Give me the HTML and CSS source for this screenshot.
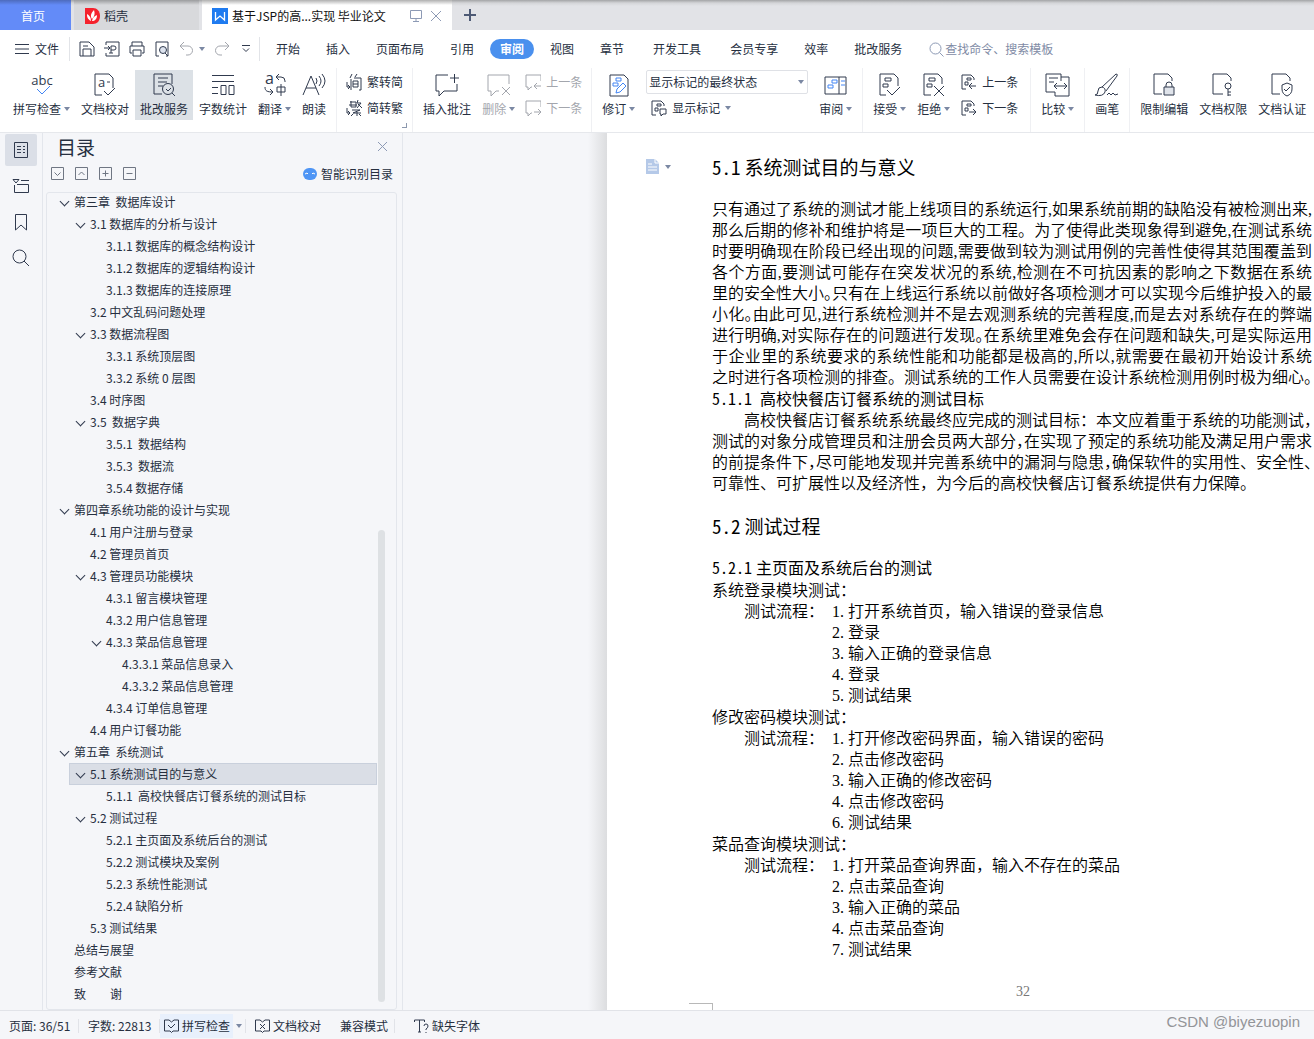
FILE: index.html
```html
<!DOCTYPE html>
<html lang="zh-CN">
<head>
<meta charset="utf-8">
<title>基于JSP的高…实现 毕业论文</title>
<link rel="stylesheet" href="styles.css">
</head>
<body>
<svg class="defs" aria-hidden="true">
  <symbol id="caret" viewBox="0 0 6 4"><path d="M0 0h6L3 4z" fill="#7b88a3" stroke="none"/></symbol>
  <symbol id="bubble" viewBox="0 0 16 16"><path d="M16 7V1H1v12h2v3l3-3h1"/></symbol>
  <symbol id="marks" viewBox="0 0 16 16"><path d="M5 15H1V1h9l3 3v2M4 8h3v3H4zM6 4h4v2H6z"/></symbol>
</svg>

<header class="tabbar">
  <a class="tab tab-home" href="#">首页</a>
  <a class="tab tab-shell" href="#">
    <svg class="logo" width="15" height="16" viewBox="0 0 15 16"><path d="M0 0h8c4 0 7 3 7 8s-3 8-7 8H0z" fill="#f5222d"/><path d="M6 13C2 11 2 8 2 6c2 1 4 3 4 7zM7 11C5 8 6 5 9 2c1 3 1 6-2 9zM7 13c1-4 3-5 5-6 0 4-2 6-5 6z" fill="#fff"/></svg>
    稻壳</a>
  <a class="tab tab-doc" href="#">
    <svg class="logo" width="16" height="16" viewBox="0 0 16 16"><path d="M0 0h16v16H0z" fill="#1f7bf0"/><path d="M3.500 4v8L8 8l4.500 4V4" fill="none" stroke="#fff" stroke-width="1.300"/></svg>
    <span class="tab-title">基于JSP的高...实现 毕业论文</span>
    <svg class="faint" width="12" height="12" viewBox="0 0 12 12"><path d="M.5.5h11v8H.5zM6 8.500v3M3 11.500h6"/></svg>
    <svg class="faint" width="12" height="12" viewBox="0 0 12 12"><path d="m1 1 10 10M11 1 1 11"/></svg>
  </a>
  <button class="tab-new" aria-label="新建"><svg width="12" height="12" viewBox="0 0 12 12"><path d="M6 0v12M0 6h12" stroke="#4d5a75" stroke-width="2"/></svg></button>
</header>

<nav class="menubar">
  <button class="file"><svg width="14" height="10" viewBox="0 0 14 10"><path d="M0 .5h14M0 5h14M0 9.500h14"/></svg>文件</button>
  <div class="quick">
    <button aria-label="保存"><svg width="16" height="16" viewBox="0 0 16 16"><path d="M1 15V1h9l5 5v9zM4 15V8h8v7M4 5h5"/></svg></button>
    <button aria-label="输出为PDF"><svg width="16" height="16" viewBox="0 0 16 16"><path d="M2 4V1h13v14H2v-3M0 7h6M4 5l2 2-2 2M7 12V5h3a2 2 0 0 1 0 4H7M5 12h4"/></svg></button>
    <button aria-label="打印"><svg width="16" height="16" viewBox="0 0 16 16"><path d="M3 5V1h10v4M3 12H1V5h14v7h-2M4 9h8v6H4z"/></svg></button>
    <button aria-label="打印预览"><svg width="16" height="16" viewBox="0 0 16 16"><path d="M5 15H2V1h12v14h-2"/><circle cx="9" cy="9" r="3.500" fill="#dde3ee"/><path d="m11 12 3 3"/></svg></button>
    <button aria-label="撤销" class="dim undo"><svg width="16" height="16" viewBox="0 0 16 16"><path d="M5 1 1 5l4 4M1 5h8a4.500 4.500 0 0 1 0 9H7"/></svg><svg class="caret"><use href="#caret"/></svg></button>
    <button aria-label="恢复" class="dim"><svg width="16" height="16" viewBox="0 0 16 16"><path d="m11 1 4 4-4 4M15 5H6a4.500 4.500 0 0 0 0 9h2"/></svg></button>
    <button aria-label="更多"><svg width="8" height="8" viewBox="0 0 8 8"><path d="M0 .5h8M1 3.500l3 3 3-3"/></svg></button>
  </div>
  <a href="#">开始</a><a href="#">插入</a><a href="#">页面布局</a><a href="#">引用</a><a href="#" class="active">审阅</a><a href="#">视图</a><a href="#">章节</a><a href="#" class="spaced">开发工具</a><a href="#" class="spaced">会员专享</a><a href="#">效率</a><a href="#">批改服务</a>
  <label class="search"><svg width="15" height="15" viewBox="0 0 15 15"><circle cx="6.500" cy="6.500" r="5.500"/><path d="m10.500 10.500 4 4"/></svg><input type="text" placeholder="查找命令、搜索模板" aria-label="查找命令"></label>
</nav>

<section class="ribbon">
  <div class="group first">
    <button class="big"><svg width="26" height="24" viewBox="0 0 26 24"><text x="13" y="12" text-anchor="middle" class="glyph">abc</text><path class="blue" d="m8 16 5 5 8-8"/></svg><span>拼写检查<svg class="caret"><use href="#caret"/></svg></span></button>
    <button class="big"><svg width="24" height="24" viewBox="0 0 24 24"><path d="M9 22H2V1h14l4 4v10M17 9h-3M11 18l4 4 7-7"/><text x="5" y="14" class="glyph">a</text></svg><span>文档校对</span></button>
    <button class="big on"><svg width="24" height="24" viewBox="0 0 24 24"><path d="M10 21H2V1h18v10M6 5h10M6 9h9M6 13h5"/><circle cx="16" cy="16" r="5.500"/><path d="m14 16 2 2 3-3M20 20l3 3"/></svg><span>批改服务</span></button>
    <button class="big"><svg width="24" height="24" viewBox="0 0 24 24"><path d="M1 2.500h22M1 8.500h22M1 14.500h6M1 20.500h6M10 12.500h5v9h-5zM18 12.500h5v9h-5z"/></svg><span>字数统计</span></button>
    <button class="big"><svg width="24" height="24" viewBox="0 0 24 24"><text x="2" y="11" class="glyph big-a">a</text><path d="M16 1l-3 3 3 3M13 4h5a4 4 0 0 1 4 4v1M2 14c0 4 2 5 8 5M7 16l3 3-3 3M14 14h8v5h-8zM18 11v12"/></svg><span>翻译<svg class="caret"><use href="#caret"/></svg></span></button>
    <button class="big"><svg width="24" height="24" viewBox="0 0 24 24"><path d="m1 22 8-19 8 19M4 15h10M14 5q2 3 0 6M17 3q4 5 0 10M20 1q6 7 0 14"/></svg><span>朗读</span></button>
  </div>
  <div class="group launcher">
    <div class="stack">
      <button><svg width="16" height="16" viewBox="0 0 16 16"><path d="M5 5v11M8 4h7v12h-2M7 7h5v6H7zM7 10h5M6 0 4 4M11 0 9 3M1 8v5h2M2 11l2 2-2 2"/></svg>繁转简</button>
      <button><svg width="16" height="16" viewBox="0 0 16 16"><path d="M4 2h6M3 5h8M5 1v6h5V2M12 0l-1 3h4l-4 5M12 4l4 4M6 10h8l-7 3h8M11 12v4M7 14l-2 2M13 14l2 2M1 8v5h2M2 11l2 2-2 2"/></svg>简转繁</button>
    </div>
  </div>
  <div class="group">
    <button class="big"><svg width="24" height="24" viewBox="0 0 24 24"><path d="M13 2H1v16h3v5l5-5h13v-7M15 5h9M19.500 1v9"/></svg><span>插入批注</span></button>
    <button class="big dim"><svg width="24" height="24" viewBox="0 0 24 24"><path d="M22 11V2H1v16h3v5l5-5h3M15 14l8 8M23 14l-8 8"/></svg><span>删除<svg class="caret"><use href="#caret"/></svg></span></button>
    <div class="stack">
      <button class="dim"><svg width="16" height="16" viewBox="0 0 16 16"><use href="#bubble"/><path d="M16 12H9M12 9l-3 3 3 3"/></svg>上一条</button>
      <button class="dim"><svg width="16" height="16" viewBox="0 0 16 16"><use href="#bubble"/><path d="M9 12h7M13 9l3 3-3 3"/></svg>下一条</button>
    </div>
  </div>
  <div class="group">
    <button class="big"><svg width="24" height="24" viewBox="0 0 24 24"><path d="M3 2h14l4 4v17H3z"/><path class="blue" d="M9 5h5v3H9zM6 10h5v3H6zM9 20l1-4 6-6 3 3-6 6z"/></svg><span>修订<svg class="caret"><use href="#caret"/></svg></span></button>
    <div class="stack wide">
      <div class="picker"><select aria-label="显示状态"><option>显示标记的最终状态</option></select><svg class="caret"><use href="#caret"/></svg></div>
      <button class="show"><svg width="16" height="16" viewBox="0 0 16 16"><use href="#marks"/><path d="M9 9h6v5h-3l-2 2v-2H9z"/></svg>显示标记<svg class="caret"><use href="#caret"/></svg></button>
    </div>
    <button class="big"><svg width="24" height="24" viewBox="0 0 24 24"><path d="M1 4h21v17H1zM15 4v17"/><path class="blue" d="M8 7h5v3H8zM4 12h5v3H4zM17 8h4M17 12h4"/></svg><span>审阅<svg class="caret"><use href="#caret"/></svg></span></button>
  </div>
  <div class="group">
    <button class="big"><svg width="24" height="24" viewBox="0 0 24 24"><path d="M8 22H2V1h14l4 4v8M7 5h6v3H7zM5 11h5v3H5zM9 17l5 5 8-8"/></svg><span>接受<svg class="caret"><use href="#caret"/></svg></span></button>
    <button class="big"><svg width="24" height="24" viewBox="0 0 24 24"><path d="M9 22H2V1h14l4 4v6M7 5h6v3H7zM5 11h5v3H5zM12 13l10 10M22 13 12 23"/></svg><span>拒绝<svg class="caret"><use href="#caret"/></svg></span></button>
    <div class="stack roomy">
      <button><svg width="16" height="16" viewBox="0 0 16 16"><use href="#marks"/><path d="M15 12H8M11 9l-3 3 3 3"/></svg>上一条</button>
      <button><svg width="16" height="16" viewBox="0 0 16 16"><use href="#marks"/><path d="M8 12h7M12 9l3 3-3 3"/></svg>下一条</button>
    </div>
  </div>
  <div class="group">
    <button class="big"><svg width="24" height="24" viewBox="0 0 24 24"><path d="M15 8V1H0v18h9M9 19v4h14V4h-8M3 5h9M3 9h5M8 13h13M11 10l-3 3 3 3M18 10l3 3-3 3"/></svg><span>比较<svg class="caret"><use href="#caret"/></svg></span></button>
  </div>
  <div class="group">
    <button class="big"><svg width="24" height="24" viewBox="0 0 24 24"><path d="M7 14 21 1q2 0 1 2L11 18M7 14q-4 0-4 4t-3 4q8 2 10-3 1-4-3-5zM12 22l2-2 2 2 2-2 2 2 3-1"/></svg><span>画笔</span></button>
  </div>
  <div class="group">
    <button class="big"><svg width="24" height="24" viewBox="0 0 24 24"><path d="M10 21H2V1h14l4 4v3M14 14v-2a3 3 0 0 1 6 0v2"/><path d="M12 14h10v8H12z" fill="#dfe3ea"/></svg><span>限制编辑</span></button>
    <button class="big"><svg width="24" height="24" viewBox="0 0 24 24"><path d="M12 21H2V1h14l4 4v3M17 16v7M17 19h3M17 22h3"/><circle cx="17" cy="13" r="3"/></svg><span>文档权限</span></button>
    <button class="big"><svg width="24" height="24" viewBox="0 0 24 24"><path d="M10 21H2V1h14l4 4v3M17 10l5 2v4q0 5-5 7-5-2-5-7v-4zM14 16l2 2 4-4"/></svg><span>文档认证</span></button>
  </div>
</section>

<main class="workspace">
  <aside class="rail">
    <button class="on" aria-label="目录"><svg width="16" height="18" viewBox="0 0 16 18"><path d="M1.500 1.500h13v15h-13zM4 5.500h4M10 5.500h2M4 8.500h4M10 8.500h2M4 11.500h4M10 11.500h2"/></svg></button>
    <button aria-label="章节"><svg width="16" height="16" viewBox="0 0 16 16"><path d="M0 1.500h6L3 5zM8 2.500h8M1.500 7v7.500h14v-8H4"/></svg></button>
    <button aria-label="书签"><svg width="16" height="18" viewBox="0 0 16 18"><path d="M2.500 1.500h11V17L8 12l-5.500 5z"/></svg></button>
    <button aria-label="查找"><svg width="18" height="18" viewBox="0 0 18 18"><circle cx="7.500" cy="7.500" r="6.500"/><path d="m12 12 5 5"/></svg></button>
  </aside>

  <section class="outline">
    <div class="outline-head"><h1>目录</h1><button aria-label="关闭"><svg class="faint" width="11" height="11" viewBox="0 0 11 11"><path d="m1 1 9 9M10 1 1 10"/></svg></button></div>
    <div class="outline-tools">
      <button aria-label="展开"><svg width="13" height="13" viewBox="0 0 13 13"><path d="M.5.5h12v12H.5zM3.500 5.500l3 3 3-3"/></svg></button>
      <button aria-label="收起"><svg width="13" height="13" viewBox="0 0 13 13"><path d="M.5.5h12v12H.5zM3.500 8l3-3 3 3"/></svg></button>
      <button aria-label="增加级别"><svg width="13" height="13" viewBox="0 0 13 13"><path d="M.5.5h12v12H.5zM3.500 6.500h6M6.500 3.500v6"/></svg></button>
      <button aria-label="降低级别"><svg width="13" height="13" viewBox="0 0 13 13"><path d="M.5.5h12v12H.5zM3.500 6.500h6"/></svg></button>
      <a href="#" class="smart"><svg width="14" height="12" viewBox="0 0 14 12"><rect width="14" height="12" rx="6" fill="#4e95f5" stroke="none"/><path d="M2 6l2-1M4 5l1 1M9 6l1-1M10 5l2 1" stroke="#fff"/></svg>智能识别目录</a>
    </div>
    <div class="tree">
      <ul>
        <li class="l0 open">第三章&nbsp; 数据库设计</li>
        <li class="l1 open">3.1 数据库的分析与设计</li>
        <li class="l2">3.1.1 数据库的概念结构设计</li>
        <li class="l2">3.1.2 数据库的逻辑结构设计</li>
        <li class="l2">3.1.3 数据库的连接原理</li>
        <li class="l1">3.2 中文乱码问题处理</li>
        <li class="l1 open">3.3 数据流程图</li>
        <li class="l2">3.3.1 系统顶层图</li>
        <li class="l2">3.3.2 系统 0 层图</li>
        <li class="l1">3.4 时序图</li>
        <li class="l1 open">3.5&nbsp; 数据字典</li>
        <li class="l2">3.5.1&nbsp; 数据结构</li>
        <li class="l2">3.5.3&nbsp; 数据流</li>
        <li class="l2">3.5.4 数据存储</li>
        <li class="l0 open">第四章系统功能的设计与实现</li>
        <li class="l1">4.1 用户注册与登录</li>
        <li class="l1">4.2 管理员首页</li>
        <li class="l1 open">4.3 管理员功能模块</li>
        <li class="l2">4.3.1 留言模块管理</li>
        <li class="l2">4.3.2 用户信息管理</li>
        <li class="l2 open">4.3.3 菜品信息管理</li>
        <li class="l3">4.3.3.1 菜品信息录入</li>
        <li class="l3">4.3.3.2 菜品信息管理</li>
        <li class="l2">4.3.4 订单信息管理</li>
        <li class="l1">4.4 用户订餐功能</li>
        <li class="l0 open">第五章&nbsp; 系统测试</li>
        <li class="l1 open current">5.1 系统测试目的与意义</li>
        <li class="l2">5.1.1&nbsp; 高校快餐店订餐系统的测试目标</li>
        <li class="l1 open">5.2 测试过程</li>
        <li class="l2">5.2.1 主页面及系统后台的测试</li>
        <li class="l2">5.2.2 测试模块及案例</li>
        <li class="l2">5.2.3 系统性能测试</li>
        <li class="l2">5.2.4 缺陷分析</li>
        <li class="l1">5.3 测试结果</li>
        <li class="l0">总结与展望</li>
        <li class="l0">参考文献</li>
        <li class="l0">致　　谢</li>
      </ul>
      <div class="scrollbar"></div>
    </div>
  </section>

  <div class="canvas">
    <article class="page">
      <div class="page-tag"><svg width="13" height="15" viewBox="0 0 13 15"><path d="M0 0h9l4 4v11H0z" fill="#b5c9e8" stroke="none"/><path d="M9 0v4h4M2 5h4M2 8h9M2 11h9" stroke="#fff"/></svg><svg class="caret"><use href="#caret"/></svg></div>
      <h2><span>5.1</span>系统测试目的与意义</h2>
      <p>
        <span class="line">只有通过了系统的测试才能上线项目的系统运行,如果系统前期的缺陷没有被检测出来,</span>
        <span class="line">那么后期的修补和维护将是一项巨大的工程。为了使得此类现象得到避免,在测试系统</span>
        <span class="line">时要明确现在阶段已经出现的问题,需要做到较为测试用例的完善性使得其范围覆盖到</span>
        <span class="line">各个方面,要测试可能存在突发状况的系统,检测在不可抗因素的影响之下数据在系统</span>
        <span class="line">里的安全性大小<i>。</i>只有在上线运行系统以前做好各项检测才可以实现今后维护投入的最</span>
        <span class="line">小化<i>。</i>由此可见,进行系统检测并不是去观测系统的完善程度,而是去对系统存在的弊端</span>
        <span class="line">进行明确,对实际存在的问题进行发现<i>。</i>在系统里难免会存在问题和缺失,可是实际运用</span>
        <span class="line">于企业里的系统要求的系统性能和功能都是极高的,所以,就需要在最初开始设计系统</span>
        <span class="line">之时进行各项检测的排查。测试系统的工作人员需要在设计系统检测用例时极为细心<i>。</i></span>
      </p>
      <h3>5.1.1 高校快餐店订餐系统的测试目标</h3>
      <p>
        <span class="line indent">高校快餐店订餐系统系统最终应完成的测试目标：本文应着重于系统的功能测试<i>，</i></span>
        <span class="line">测试的对象分成管理员和注册会员两大部分<i>，</i>在实现了预定的系统功能及满足用户需求</span>
        <span class="line">的前提条件下<i>，</i>尽可能地发现并完善系统中的漏洞与隐患<i>，</i>确保软件的实用性、安全性<i>、</i></span>
        <span class="line last">可靠性、可扩展性以及经济性，为今后的高校快餐店订餐系统提供有力保障。</span>
      </p>
      <h2 class="second"><span>5.2</span>测试过程</h2>
      <h3 class="second"><span>5.2.1</span>主页面及系统后台的测试</h3>
      <div class="case"><p>系统登录模块测试：</p><div class="flow"><span>测试流程：</span>
        <ul><li><b>1.</b>打开系统首页，输入错误的登录信息</li><li><b>2.</b>登录</li><li><b>3.</b>输入正确的登录信息</li><li><b>4.</b>登录</li><li><b>5.</b>测试结果</li></ul></div></div>
      <div class="case"><p>修改密码模块测试：</p><div class="flow"><span>测试流程：</span>
        <ul><li><b>1.</b>打开修改密码界面，输入错误的密码</li><li><b>2.</b>点击修改密码</li><li><b>3.</b>输入正确的修改密码</li><li><b>4.</b>点击修改密码</li><li><b>6.</b>测试结果</li></ul></div></div>
      <div class="case"><p>菜品查询模块测试：</p><div class="flow"><span>测试流程：</span>
        <ul><li><b>1.</b>打开菜品查询界面，输入不存在的菜品</li><li><b>2.</b>点击菜品查询</li><li><b>3.</b>输入正确的菜品</li><li><b>4.</b>点击菜品查询</li><li><b>7.</b>测试结果</li></ul></div></div>
      <footer class="folio">32</footer>
      <div class="crop"></div>
    </article>
  </div>
</main>

<footer class="status">
  <span class="cell pages">页面: 36/51</span>
  <span class="cell words">字数: 22813</span>
  <button class="spell"><svg width="15" height="14" viewBox="0 0 15 14"><path d="M5 1H.5v11H6l1.500 1.500L9 12h5.500V1H10L7.500 3 5 1M4 6l3 3 4-4"/></svg>拼写检查</button>
  <button class="drop" aria-label="拼写选项"><svg class="caret"><use href="#caret"/></svg></button>
  <button class="proof"><svg width="15" height="14" viewBox="0 0 15 14"><path d="M5 1H.5v11H6l1.500 1.500L9 12h5.500V1H10L7.500 3 5 1M5 5l5 5M10 5l-5 5"/></svg>文档校对</button>
  <span class="cell compat">兼容模式</span>
  <button class="fonts"><svg width="15" height="14" viewBox="0 0 15 14"><path d="M.5 3V1h10v2M5.500 1v12M4 13h3M10 7q0-2 2-2t2 2-2 3v1M12 13v1"/></svg>缺失字体</button>
  <span class="credit">CSDN @biyezuopin</span>
</footer>
</body>
</html>
```
FILE: styles.css
```css
* { box-sizing: border-box; }

body {
  margin: 0;
  height: 100vh;
  display: flex;
  flex-direction: column;
  overflow: hidden;
  background: #f5f6f9;
  color: #262f3f;
  font: 12px/18px "Noto Sans CJK SC", sans-serif;
}

a { color: inherit; text-decoration: none; }
button { font: inherit; color: inherit; background: none; border: 0; padding: 0; white-space: nowrap; }
ul { list-style: none; margin: 0; padding: 0; }
h1, h2, h3, p { margin: 0; font-weight: inherit; }
svg { fill: none; stroke: #303a4e; flex: none; overflow: visible; }
.logo { stroke: none; }
.defs { position: absolute; width: 0; height: 0; }
.caret { width: 6px; height: 4px; }
.faint { stroke: #8d9ab5; }
.blue { stroke: #4285f4; }
.dim { color: #a3a6ad; }
.dim svg { stroke: #a3a6ad; }
.glyph { font: 13px "Open Sans", sans-serif; fill: #303a4e; stroke: none; }
.big-a { font-size: 16px; }

/* document tabs */
.tabbar {
  display: flex;
  flex: none;
  height: 30px;
  background: linear-gradient(#a3a4a6, #d4d5d8 3px, #e2e3e7 6px);
}
.tab { display: flex; align-items: center; padding-top: 1px; }
.tab-home {
  width: 71px;
  justify-content: center;
  padding-right: 5px;
  color: #fff;
  background: linear-gradient(#4d6bbd, #638bf8 5px);
}
.tab-shell {
  width: 125px;
  margin-left: 3px;
  padding-left: 11px;
  gap: 4px;
  background: linear-gradient(#9b9c9e, #d8d9dc 5px);
}
.tab-doc {
  width: 250px;
  margin-left: 3px;
  padding-left: 10px;
  color: #111;
  background: linear-gradient(#b0b0b0, #fff 5px);
}
.tab-title { width: 178px; padding-left: 4px; white-space: nowrap; }
.tab-doc .faint { margin-left: 4px; margin-right: 4px; }
.tab-new { width: 36px; display: grid; place-items: center; }

/* menu row */
.menubar {
  display: flex;
  flex: none;
  align-items: center;
  height: 38px;
  background: #fff;
  white-space: nowrap;
}
.file {
  display: flex;
  align-items: center;
  gap: 6px;
  width: 70px;
  height: 24px;
  padding-left: 15px;
  border-right: 1px solid #e2e4e8;
}
.quick {
  display: flex;
  align-items: center;
  gap: 9px;
  width: 190px;
  height: 24px;
  padding-left: 9px;
  margin-right: 3px;
  border-right: 1px solid #e2e4e8;
}
.quick button { display: flex; align-items: center; gap: 4px; }
.quick button:last-child { margin-left: 3px; }
.menubar a { padding: 0 13px; }
.menubar .spaced { margin-left: 3px; }
.menubar .active {
  margin: 0 3px;
  padding: 1px 10px;
  border-radius: 10px;
  background: #4a90ee;
  color: #fff;
  font-weight: 700;
}
.search { display: flex; align-items: center; gap: 1px; margin-left: 14px; color: #7f8ba5; }
.search svg { stroke: #8d9ab5; }
.search input { width: 140px; padding: 0; border: 0; background: none; font: inherit; color: inherit; }
.search input::placeholder { color: #7f8ba5; }

/* ribbon */
.ribbon {
  display: flex;
  flex: none;
  height: 64px;
  background: #fff;
}
.group {
  display: flex;
  gap: 1px;
  padding: 2px 5px 12px;
  border-right: 1px solid #eff0f3;
}
.group.first { padding-left: 8px; }
.group:last-child { border: 0; }
.launcher {
  background: linear-gradient(#8c98ae, #8c98ae) right 5px bottom 4px / 5px 1px no-repeat,
    linear-gradient(#8c98ae, #8c98ae) right 5px bottom 4px / 1px 5px no-repeat;
}
.big {
  display: flex;
  flex-direction: column;
  align-items: center;
  padding: 3px 5px 0;
  gap: 3px;
}
.big.on { background: #dce1e6; }
.big span { display: flex; align-items: center; gap: 3px; }
.stack { display: flex; flex-direction: column; gap: 8px; margin: 0 4px; padding-top: 3px; }
.stack button { display: flex; align-items: center; gap: 5px; }
.stack.wide { width: 162px; gap: 5px; margin: 0 5px; padding: 0; }
.stack.roomy { margin: 0 7px 0 5px; }
.stack .show { padding-left: 5px; }
.picker { position: relative; }
.picker select {
  display: block;
  width: 100%;
  height: 24px;
  padding: 0 2px;
  border: 1px solid #dfe1e6;
  border-radius: 2px;
  appearance: none;
  background: #fff;
  color: inherit;
  font: inherit;
}
.picker .caret { position: absolute; right: 4px; top: 10px; }

/* workspace */
.workspace {
  display: flex;
  flex: 1;
  min-height: 0;
  border-top: 1px solid #e6e8ec;
}
.rail {
  width: 43px;
  flex: none;
  display: flex;
  flex-direction: column;
  gap: 4px;
  padding: 1px 5px;
  border-right: 1px solid #e3e6ec;
}
.rail button { width: 32px; height: 32px; display: grid; place-items: center; border-radius: 2px; }
.rail .on { background: #dbdfe7; }

.outline {
  width: 360px;
  flex: none;
  display: flex;
  flex-direction: column;
  padding: 0 5px 0 3px;
  border-right: 1px solid #e3e6ec;
}
.outline-head { display: flex; justify-content: space-between; align-items: center; height: 27px; padding: 0 9px 0 11px; }
.outline-head h1 { font-size: 19px; line-height: 26px; }
.outline-tools { display: flex; align-items: center; gap: 11px; height: 27px; padding: 0 4px 0 5px; margin-bottom: 5px; }
.outline-tools button { display: flex; }
.outline-tools button svg { stroke: #6f7683; }
.smart { display: flex; align-items: center; gap: 4px; margin-left: auto; }
.tree {
  position: relative;
  flex: 1;
  min-height: 0;
  overflow: hidden;
  border: 1px solid #e3e6ec;
  border-radius: 3px;
}
.tree ul { padding-right: 19px; margin-top: -2px; }
.tree li {
  height: 22px;
  padding: 1px 0 0 21px;
  line-height: 20px;
  white-space: nowrap;
}
.l0 { margin-left: 6px; }
.l1 { margin-left: 22px; }
.l2 { margin-left: 38px; }
.l3 { margin-left: 54px; }
.tree .open::before {
  content: "";
  float: left;
  width: 6px;
  height: 6px;
  margin: 6px 0 0 -13px;
  border: solid #303a4e;
  border-width: 0 1px 1px 0;
  transform: rotate(45deg);
}
.tree .current { background: #dadee6; box-shadow: inset 0 0 0 1px #c9d0dc; }
.scrollbar {
  position: absolute;
  right: 11px;
  top: 337px;
  bottom: 7px;
  width: 7px;
  border-radius: 4px;
  background: #dee1e4;
}

/* page */
.canvas { flex: 1; min-width: 0; display: flex; padding-left: 185px; }
.canvas::before { content: ""; width: 19px; flex: none; background: linear-gradient(90deg, #f5f6f9, #dcdddf); }
.page {
  position: relative;
  flex: 1;
  min-width: 0;
  overflow: hidden;
  padding: 20px 2px 0 105px;
  background: #fff;
  color: #000;
  font: 350 16px/21px "Liberation Serif", "Noto Sans CJK SC", serif;
  white-space: nowrap;
}
.page-tag { position: absolute; left: 39px; top: 26px; display: flex; align-items: center; gap: 6px; }
.page h2, .page h3 {
  font-family: "Noto Sans CJK SC", sans-serif;
  font-feature-settings: "hwid";
  font-weight: 400;
}
.page h2 { font-size: 19px; line-height: 28px; margin-bottom: 18px; }
.page h2 span, .page h3 span { margin-right: 4px; }
.page h2.second { margin: 18px 0 17px; }
.page h3 { font-size: 16px; line-height: 21px; margin-bottom: 1px; }
.page h3.second { margin-bottom: 2px; }
.line { display: block; text-align: justify; text-align-last: justify; }
.line.indent { padding-left: 32px; }
.line.last { text-align-last: left; }
.line i { font-style: normal; font-feature-settings: "halt"; }
.case { margin-bottom: 1px; }
.flow { display: flex; padding-left: 32px; }
.flow > span { width: 88px; }
.flow b { display: inline-block; width: 16px; font-weight: inherit; }
.folio { margin-top: 20px; padding-left: 22px; text-align: center; color: #777; font: 14px/24px "Liberation Serif", serif; }
.crop {
  position: absolute;
  left: 82px;
  bottom: 0;
  width: 24px;
  height: 7px;
  border: solid #b8b8b8;
  border-width: 1px 1px 0 0;
}

/* status bar */
.status {
  display: flex;
  flex: none;
  align-items: center;
  height: 29px;
  padding: 2px 14px 0 9px;
  border-top: 1px solid #e1e3e8;
  white-space: nowrap;
}
.status button { display: flex; align-items: center; gap: 3px; }
.cell { border-right: 1px solid #e1e3e8; line-height: 14px; }
.pages { width: 70px; }
.words { width: 81px; padding-left: 9px; }
.status .spell { width: 73px; height: 24px; padding-left: 4px; background: #e8f0fc; }
.drop { width: 13px; height: 14px; justify-content: center; border-right: 1px solid #e1e3e8; }
.status .proof { padding-left: 9px; }
.compat { width: 74px; padding-left: 19px; }
.status .fonts { padding-left: 19px; }
.credit { margin-left: auto; padding-bottom: 8px; color: #939498; font: 15px/20px "Liberation Sans", sans-serif; }
```
